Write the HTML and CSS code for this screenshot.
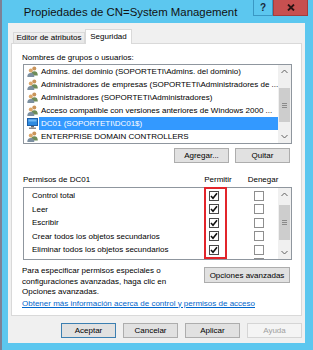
FILE: index.html
```html
<!DOCTYPE html>
<html lang="es">
<head>
<meta charset="utf-8">
<title>Propiedades de CN=System Management</title>
<link rel="stylesheet" href="styles.css">
</head>
<body>
<div class="window">
  <div class="titlebar">
    <div class="title">Propiedades de CN=System Management</div>
    <div class="capbtn help">?</div>
    <div class="capbtn close"><svg width="8" height="7" viewBox="0 0 8 7"><path d="M1 0.5 L7 6.5 M7 0.5 L1 6.5" stroke="#2a1414" stroke-width="1.8"/></svg></div>
  </div>
  <div class="frame">
    <div class="client">
      <div class="tabs">
        <div class="tab">Editor de atributos</div>
        <div class="tab active">Seguridad</div>
      </div>
      <div class="panel">
        <div class="label">Nombres de grupos o usuarios:</div>
        <div class="listbox">
          <div class="rows">
            <div class="item"><svg class="ico" width="11" height="11" viewBox="0 0 11 11"><circle cx="7.3" cy="2.6" r="2" fill="#c9945a"/><path d="M3.8 9.5 Q3.8 5.2 7.3 5.2 Q10.8 5.2 10.8 9.5 Z" fill="#6e8c58"/><circle cx="3.8" cy="4.6" r="2" fill="#dba66a"/><path d="M0.3 11 Q0.3 7 3.8 7 Q7.3 7 7.3 11 Z" fill="#7b8fa0"/></svg><span class="txt">Admins. del dominio (SOPORTETI\Admins. del dominio)</span></div>
            <div class="item"><svg class="ico" width="11" height="11" viewBox="0 0 11 11"><circle cx="7.3" cy="2.6" r="2" fill="#c9945a"/><path d="M3.8 9.5 Q3.8 5.2 7.3 5.2 Q10.8 5.2 10.8 9.5 Z" fill="#6e8c58"/><circle cx="3.8" cy="4.6" r="2" fill="#dba66a"/><path d="M0.3 11 Q0.3 7 3.8 7 Q7.3 7 7.3 11 Z" fill="#7b8fa0"/></svg><span class="txt">Administradores de empresas (SOPORTETI\Administradores de ...</span></div>
            <div class="item"><svg class="ico" width="11" height="11" viewBox="0 0 11 11"><circle cx="7.3" cy="2.6" r="2" fill="#c9945a"/><path d="M3.8 9.5 Q3.8 5.2 7.3 5.2 Q10.8 5.2 10.8 9.5 Z" fill="#6e8c58"/><circle cx="3.8" cy="4.6" r="2" fill="#dba66a"/><path d="M0.3 11 Q0.3 7 3.8 7 Q7.3 7 7.3 11 Z" fill="#7b8fa0"/></svg><span class="txt">Administradores (SOPORTETI\Administradores)</span></div>
            <div class="item"><svg class="ico" width="11" height="11" viewBox="0 0 11 11"><circle cx="7.3" cy="2.6" r="2" fill="#c9945a"/><path d="M3.8 9.5 Q3.8 5.2 7.3 5.2 Q10.8 5.2 10.8 9.5 Z" fill="#6e8c58"/><circle cx="3.8" cy="4.6" r="2" fill="#dba66a"/><path d="M0.3 11 Q0.3 7 3.8 7 Q7.3 7 7.3 11 Z" fill="#7b8fa0"/></svg><span class="txt">Acceso compatible con versiones anteriores de Windows 2000 ...</span></div>
            <div class="item selected"><svg class="ico" width="11" height="11" viewBox="0 0 11 11"><rect x="0.5" y="0.5" width="10" height="7" fill="#2f8be0" stroke="#1b5ea8"/><rect x="1.5" y="1.5" width="8" height="2" fill="#6fb8f5"/><rect x="4" y="8" width="3" height="1.5" fill="#6a6a6a"/><rect x="2" y="9.5" width="7" height="1.5" fill="#8c8c8c"/></svg><span class="txt">DC01 (SOPORTETI\DC01$)</span></div>
            <div class="item"><svg class="ico" width="11" height="11" viewBox="0 0 11 11"><circle cx="7.3" cy="2.6" r="2" fill="#c9945a"/><path d="M3.8 9.5 Q3.8 5.2 7.3 5.2 Q10.8 5.2 10.8 9.5 Z" fill="#6e8c58"/><circle cx="3.8" cy="4.6" r="2" fill="#dba66a"/><path d="M0.3 11 Q0.3 7 3.8 7 Q7.3 7 7.3 11 Z" fill="#7b8fa0"/></svg><span class="txt">ENTERPRISE DOMAIN CONTROLLERS</span></div>
          </div>
          <div class="vscroll">
            <div class="arrow"><svg width="7" height="5" viewBox="0 0 7 5"><path d="M0.5 4 L3.5 1 L6.5 4" fill="none" stroke="#606060"/></svg></div>
            <div class="track"><div class="thumb list-thumb"><span></span><span></span><span></span></div></div>
            <div class="arrow"><svg width="7" height="5" viewBox="0 0 7 5"><path d="M0.5 1 L3.5 4 L6.5 1" fill="none" stroke="#606060"/></svg></div>
          </div>
        </div>
        <div class="btnrow">
          <button class="btn">Agregar...</button>
          <button class="btn">Quitar</button>
        </div>
        <div class="permhead">
          <span>Permisos de DC01</span>
          <span class="col">Permitir</span>
          <span class="col">Denegar</span>
        </div>
        <div class="permbox">
          <div class="prows">
            <div class="prow"><span>Control total</span><span class="cb on"><svg width="8" height="8" viewBox="0 0 8 8"><path d="M1 4 L3 6.2 L7 1.2" fill="none" stroke="#111" stroke-width="1.6"/></svg></span><span class="cb"></span></div>
            <div class="prow"><span>Leer</span><span class="cb on"><svg width="8" height="8" viewBox="0 0 8 8"><path d="M1 4 L3 6.2 L7 1.2" fill="none" stroke="#111" stroke-width="1.6"/></svg></span><span class="cb"></span></div>
            <div class="prow"><span>Escribir</span><span class="cb on"><svg width="8" height="8" viewBox="0 0 8 8"><path d="M1 4 L3 6.2 L7 1.2" fill="none" stroke="#111" stroke-width="1.6"/></svg></span><span class="cb"></span></div>
            <div class="prow"><span>Crear todos los objetos secundarios</span><span class="cb on"><svg width="8" height="8" viewBox="0 0 8 8"><path d="M1 4 L3 6.2 L7 1.2" fill="none" stroke="#111" stroke-width="1.6"/></svg></span><span class="cb"></span></div>
            <div class="prow"><span>Eliminar todos los objetos secundarios</span><span class="cb on"><svg width="8" height="8" viewBox="0 0 8 8"><path d="M1 4 L3 6.2 L7 1.2" fill="none" stroke="#111" stroke-width="1.6"/></svg></span><span class="cb"></span></div>
            <div class="prow"><span></span><span class="cb on"></span><span class="cb"></span></div>
          </div>
          <div class="vscroll">
            <div class="arrow"><svg width="7" height="5" viewBox="0 0 7 5"><path d="M0.5 4 L3.5 1 L6.5 4" fill="none" stroke="#606060"/></svg></div>
            <div class="track"><div class="thumb perm-thumb"><span></span><span></span><span></span></div></div>
            <div class="arrow"><svg width="7" height="5" viewBox="0 0 7 5"><path d="M0.5 1 L3.5 4 L6.5 1" fill="none" stroke="#606060"/></svg></div>
          </div>
          <div class="redmark"></div>
        </div>
        <div class="advrow">
          <p class="desc">Para especificar permisos especiales o<br>configuraciones avanzadas, haga clic en<br>Opciones avanzadas.</p>
          <button class="btn adv">Opciones avanzadas</button>
        </div>
        <a class="link" href="#">Obtener más información acerca de control y permisos de acceso</a>
      </div>
      <div class="dlgbtns">
        <button class="btn default">Aceptar</button>
        <button class="btn">Cancelar</button>
        <button class="btn">Aplicar</button>
        <button class="btn disabled">Ayuda</button>
      </div>
    </div>
  </div>
</div>
</body>
</html>
```

FILE: styles.css
```css
* { box-sizing: border-box; }

html, body {
  margin: 0;
  padding: 0;
}

body {
  width: 313px;
  height: 350px;
  overflow: hidden;
  background: #7d8196;
  font-family: "Liberation Sans", Arial, sans-serif;
  font-size: 8px;
  color: #000;
}

.window {
  margin-left: 2px;
  width: 311px;
  height: 350px;
  background: #5cc7ef;
  display: flex;
  flex-direction: column;
}

.titlebar {
  height: 23px;
  display: flex;
  align-items: flex-start;
  padding-right: 5px;
}

.title {
  flex: 1;
  padding-left: 6px;
  padding-top: 5px;
  text-align: center;
  font-size: 11.4px;
  line-height: 14px;
  color: #111;
  white-space: nowrap;
}

.capbtn {
  height: 16px;
  display: flex;
  align-items: center;
  justify-content: center;
}

.help {
  width: 20px;
  border: 1px solid #3a98c4;
  border-top: none;
  font-weight: bold;
  font-size: 10px;
  color: #1a2a3a;
}

.close {
  width: 35px;
  background: #c75050;
  border: 1px solid #a33d3d;
  border-top: none;
}

.frame {
  flex: 1;
  display: flex;
  padding: 0 6px 7px 6px;
}

.client {
  width: 297px;
  height: 320px;
  background: #f0f0f0;
  display: flex;
  flex-direction: column;
}

.tabs {
  display: flex;
  align-items: flex-end;
  height: 15px;
  margin: 6px 0 0 5px;
}

.tab {
  height: 12px;
  width: 72px;
  border: 1px solid #d9d9d9;
  border-bottom: none;
  background: linear-gradient(#f0f0f0, #e5e5e5);
  text-align: center;
  line-height: 10px;
  white-space: nowrap;
}

.tab.active {
  position: relative;
  z-index: 1;
  width: 47px;
  height: 15px;
  background: #fff;
  line-height: 14px;
}

.panel {
  margin: -1px 3px 0 3px;
  height: 273px;
  border: 1px solid #d9d9d9;
  background: #fff;
  padding: 0 9px 0 11px;
  display: flex;
  flex-direction: column;
}

.label {
  margin-top: 8px;
  height: 11px;
  line-height: 11px;
  margin-left: -1px;
}

.listbox {
  margin-top: 1px;
  height: 80px;
  border: 1px solid #8f969e;
  display: flex;
}

.rows {
  flex: 1;
  min-width: 0;
}

.item {
  height: 13px;
  display: flex;
  align-items: center;
  padding-left: 3px;
  white-space: nowrap;
}

.ico {
  flex: none;
}

.txt {
  flex: 1;
  min-width: 0;
  overflow: hidden;
  margin-left: 1px;
  padding-left: 2px;
  height: 13px;
  line-height: 13px;
}

.item.selected .txt {
  background: #3399ff;
  color: #fff;
}

.vscroll {
  width: 13px;
  flex: none;
  background: #f0f0f0;
  display: flex;
  flex-direction: column;
}

.arrow {
  height: 13px;
  display: flex;
  align-items: center;
  justify-content: center;
}

.track {
  flex: 1;
}

.thumb {
  margin: 0 1px;
  background: #cdcdcd;
  display: flex;
  flex-direction: column;
  align-items: center;
  justify-content: center;
  gap: 1px;
}

.thumb span {
  width: 5px;
  height: 1px;
  background: #8a8a8a;
}

.list-thumb {
  margin-top: 10px;
  height: 34px;
}

.perm-thumb {
  margin-top: 4px;
  height: 35px;
}

.btn {
  font-family: inherit;
  font-size: 8px;
  color: #000;
  background: #e1e1e1;
  border: 1px solid #adadad;
  padding: 0;
  height: 15px;
  width: 55px;
  margin: 0;
}

.btnrow {
  margin-top: 4px;
  display: flex;
  justify-content: flex-end;
  gap: 6px;
  padding-right: 2px;
}

.permhead {
  margin-top: 11px;
  height: 11px;
  line-height: 11px;
  display: grid;
  grid-template-columns: 1fr 40px 40px;
  column-gap: 5px;
  padding-right: 9px;
}

.permhead .col {
  text-align: center;
}

.permbox {
  position: relative;
  margin-top: 2px;
  height: 73px;
  border: 1px solid #8f969e;
  display: flex;
}

.prows {
  flex: 1;
  min-width: 0;
  padding-top: 1px;
  overflow: hidden;
}

.prow {
  height: 13.5px;
  display: grid;
  grid-template-columns: 1fr 20px 20px;
  column-gap: 25px;
  padding-right: 9px;
  padding-left: 8px;
  align-items: center;
  white-space: nowrap;
}

.cb {
  justify-self: center;
  width: 10px;
  height: 10px;
  border: 1px solid #8e8e8e;
  background: #fff;
  display: flex;
  align-items: center;
  justify-content: center;
}

.cb.on {
  border-color: #4a4a4a;
}

.redmark {
  position: absolute;
  left: 180px;
  top: -1px;
  width: 23px;
  height: 72px;
  border: 2px solid #e2252b;
}

.advrow {
  margin-top: 6px;
  display: flex;
  align-items: flex-start;
  padding-right: 2px;
}

.desc {
  flex: 1;
  margin: 0;
  margin-left: -1px;
  line-height: 10.5px;
  white-space: nowrap;
}

.btn.adv {
  width: 86px;
  height: 16px;
  margin-top: 1px;
}

.link {
  margin-left: -1px;
  line-height: 11px;
  color: #0066cc;
  text-decoration: underline;
  white-space: nowrap;
}

.dlgbtns {
  margin-top: 7px;
  display: flex;
  justify-content: flex-end;
  gap: 7px;
  padding-right: 3px;
}

.btn.default {
  border-color: #3c7fb1;
}

.btn.disabled {
  background: #f4f4f4;
  border-color: #d5d5d5;
  color: #a0a0a0;
}
```
